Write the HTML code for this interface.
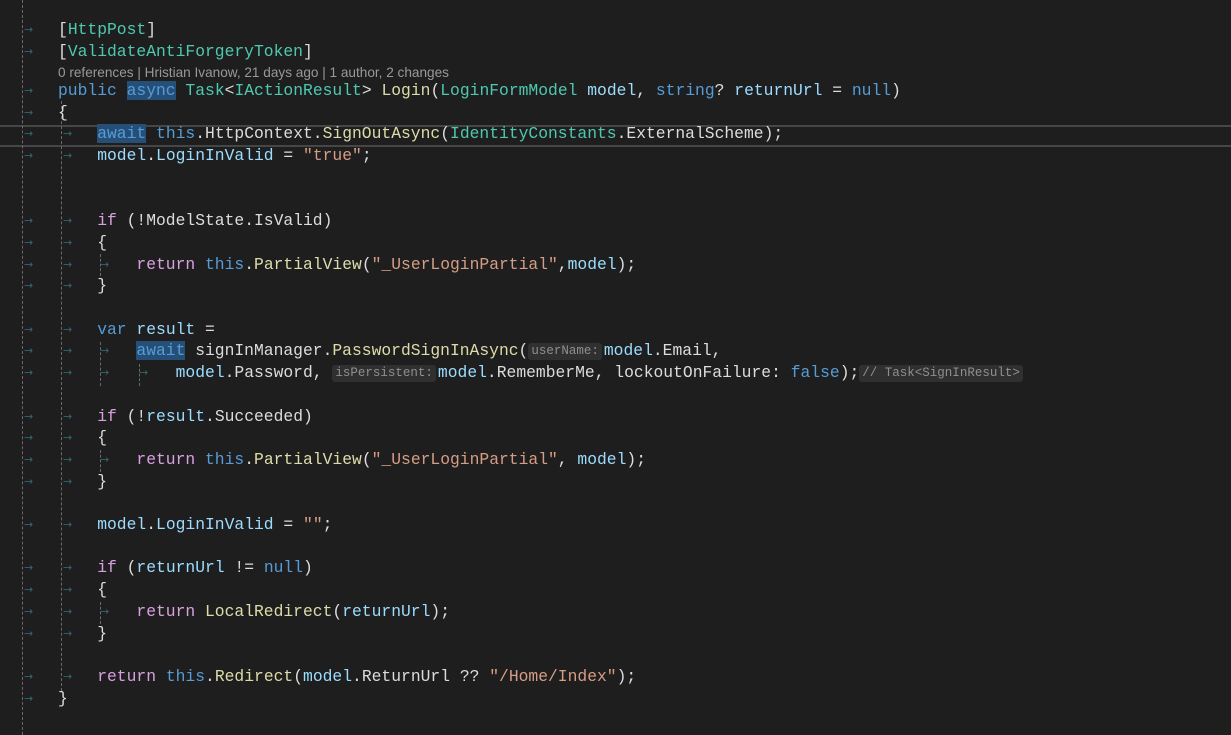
<!DOCTYPE html>
<html><head><meta charset="utf-8"><style>
body{margin:0;width:1231px;height:735px;background:#1e1e1e;overflow:hidden;position:relative;font-family:"Liberation Mono",monospace;}
.l{position:absolute;left:58px;height:22px;line-height:22px;font-size:16.33px;white-space:pre;color:#dcdcdc;}
.t{color:#4ec9b0}.k{color:#569cd6}.c{color:#d8a0df}.m{color:#dcdcaa}.v{color:#9cdcfe}.s{color:#d69d85}.p{color:#dcdcdc}
.sel{background:#264f78}
.ih{display:inline-block;font-size:12.5px;line-height:17px;background:#303030;color:#8f8f8f;padding:0 3px;border-radius:3px;vertical-align:1px;margin-right:2px;}
.g{position:absolute;width:0;border-left:1px dashed #6a6a6a;}
.a{position:absolute;color:#2f6a70;font-size:11px;line-height:22px;height:22px;font-family:"DejaVu Sans",sans-serif;}
.lens{position:absolute;left:58px;font-family:"Liberation Sans",sans-serif;font-size:13.6px;color:#999;line-height:16px;}
.cur{position:absolute;left:0;width:1231px;top:125px;height:18px;border-top:2px solid #464646;border-bottom:2px solid #464646;}
</style></head><body>
<div class="cur"></div>
<div class="g" style="left:22px;top:0;height:735px"></div>
<div class="g" style="left:61px;top:101px;height:590px"></div>
<div class="g" style="left:100px;top:254px;height:22px"></div>
<div class="g" style="left:100px;top:450px;height:22px"></div>
<div class="g" style="left:100px;top:602px;height:22px"></div>
<div class="g" style="left:100px;top:342px;height:44px"></div>
<div class="g" style="left:139px;top:364px;height:22px"></div>

<div class="lens" style="top:65px">0 references | Hristian Ivanow, 21 days ago | 1 author, 2 changes</div>

<div id="lines"></div>
<script>
const L=[
[29.5,0,'<span class="p">[</span><span class="t">HttpPost</span><span class="p">]</span>'],
[51.5,0,'<span class="p">[</span><span class="t">ValidateAntiForgeryToken</span><span class="p">]</span>'],
[91,0,'<span class="k">public</span> <span class="k sel">async</span> <span class="t">Task</span>&lt;<span class="t">IActionResult</span>&gt; <span class="m">Login</span>(<span class="t">LoginFormModel</span> <span class="v">model</span>, <span class="k">string</span>? <span class="v">returnUrl</span> = <span class="k">null</span>)'],
[112.7,0,'{'],
[134.4,1,'    <span class="k sel">await</span> <span class="k">this</span>.HttpContext.<span class="m">SignOutAsync</span>(<span class="t">IdentityConstants</span>.ExternalScheme);'],
[156.1,1,'    <span class="v">model</span>.<span class="v">LoginInValid</span> = <span class="s">"true"</span>;'],
[221.2,1,'    <span class="c">if</span> (!ModelState.IsValid)'],
[242.9,1,'    {'],
[264.6,2,'        <span class="c">return</span> <span class="k">this</span>.<span class="m">PartialView</span>(<span class="s">"_UserLoginPartial"</span>,<span class="v">model</span>);'],
[286.3,1,'    }'],
[329.7,1,'    <span class="k">var</span> <span class="v">result</span> ='],
[351.4,2,'        <span class="k sel">await</span> signInManager.<span class="m">PasswordSignInAsync</span>(<span class="ih">userName:</span><span class="v">model</span>.Email,'],
[373.1,3,'            <span class="v">model</span>.Password, <span class="ih">isPersistent:</span><span class="v">model</span>.RememberMe, lockoutOnFailure: <span class="k">false</span>);<span class="ih">// Task&lt;SignInResult&gt;</span>'],
[416.5,1,'    <span class="c">if</span> (!<span class="v">result</span>.Succeeded)'],
[438.2,1,'    {'],
[459.9,2,'        <span class="c">return</span> <span class="k">this</span>.<span class="m">PartialView</span>(<span class="s">"_UserLoginPartial"</span>, <span class="v">model</span>);'],
[481.6,1,'    }'],
[525,1,'    <span class="v">model</span>.<span class="v">LoginInValid</span> = <span class="s">""</span>;'],
[568.4,1,'    <span class="c">if</span> (<span class="v">returnUrl</span> != <span class="k">null</span>)'],
[590.1,1,'    {'],
[611.8,2,'        <span class="c">return</span> <span class="m">LocalRedirect</span>(<span class="v">returnUrl</span>);'],
[633.5,1,'    }'],
[676.9,1,'    <span class="c">return</span> <span class="k">this</span>.<span class="m">Redirect</span>(<span class="v">model</span>.ReturnUrl ?? <span class="s">"/Home/Index"</span>);'],
[698.6,0,'}']
];
const AX=[24,63,100,139];
let h='';
for(const [y,lvl,html] of L){
 const top=(y-11).toFixed(1);
 h+=`<div class="l" style="top:${top}px">${html}</div>`;
 for(let i=0;i<=lvl;i++){ if(i>=AX.length)break; h+=`<div class="a" style="left:${AX[i]}px;top:${top}px">→</div>`;}
}
document.getElementById('lines').innerHTML=h;
</script>
</body></html>
